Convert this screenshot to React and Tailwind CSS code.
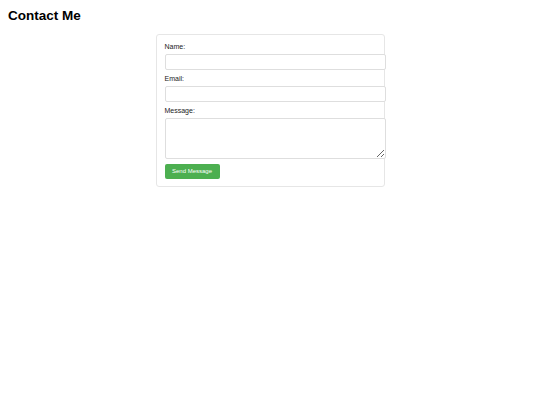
export default function App() {
  return (
    <div className="min-h-screen bg-white p-[8px] font-['Liberation_Sans',Arial,sans-serif] text-black">
      <h1 className="text-[13.5px] font-bold leading-[16px]">Contact Me</h1>
      <form
        className="mx-auto mt-[10px] w-[229px] rounded-[3px] border border-[#e6e6e6] px-[8px] pb-[7px] pt-[7px]"
        onSubmit={(e) => e.preventDefault()}
      >
        <label className="block text-[7px] leading-[10px] text-[#222]">Name:</label>
        <input
          type="text"
          className="mt-[2px] mb-[4px] block h-[16px] w-[221px] rounded-[2px] border border-[#dedede] bg-white px-[4px] text-[7px] outline-none"
        />
        <label className="block text-[7px] leading-[10px] text-[#222]">Email:</label>
        <input
          type="email"
          className="mt-[2px] mb-[4px] block h-[16px] w-[221px] rounded-[2px] border border-[#dedede] bg-white px-[4px] text-[7px] outline-none"
        />
        <label className="block text-[7px] leading-[10px] text-[#222]">Message:</label>
        <textarea className="mt-[2px] mb-[5px] block h-[41px] w-[221px] rounded-[2px] border border-[#dedede] bg-white px-[4px] text-[7px] outline-none" />
        <button
          type="submit"
          className="block h-[15px] w-[55px] rounded-[2px] bg-[#4caf50] text-[6px] leading-[15px] text-white"
        >
          Send Message
        </button>
      </form>
    </div>
  );
}
